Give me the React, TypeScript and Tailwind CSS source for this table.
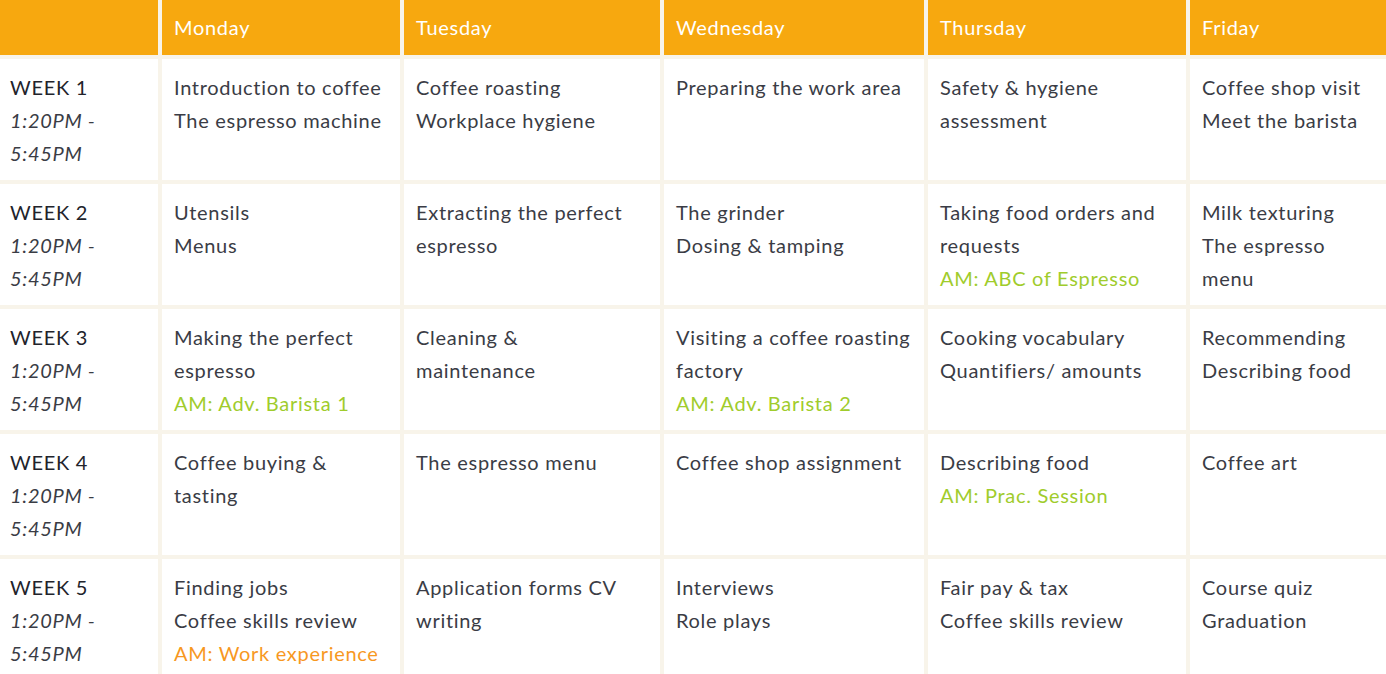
import React from 'react';

type Line = { text: string; tone?: 'green' | 'orange' };

const days = ['Monday', 'Tuesday', 'Wednesday', 'Thursday', 'Friday'];

const weeks: { label: string; cells: Line[][] }[] = [
  {
    label: 'WEEK 1',
    cells: [
      [{ text: 'Introduction to coffee' }, { text: 'The espresso machine' }],
      [{ text: 'Coffee roasting' }, { text: 'Workplace hygiene' }],
      [{ text: 'Preparing the work area' }],
      [{ text: 'Safety & hygiene assessment' }],
      [{ text: 'Coffee shop visit' }, { text: 'Meet the barista' }],
    ],
  },
  {
    label: 'WEEK 2',
    cells: [
      [{ text: 'Utensils' }, { text: 'Menus' }],
      [{ text: 'Extracting the perfect espresso' }],
      [{ text: 'The grinder' }, { text: 'Dosing & tamping' }],
      [{ text: 'Taking food orders and requests' }, { text: 'AM: ABC of Espresso', tone: 'green' }],
      [{ text: 'Milk texturing' }, { text: 'The espresso menu' }],
    ],
  },
  {
    label: 'WEEK 3',
    cells: [
      [{ text: 'Making the perfect espresso' }, { text: 'AM: Adv. Barista 1', tone: 'green' }],
      [{ text: 'Cleaning &\nmaintenance' }],
      [{ text: 'Visiting a coffee roasting factory' }, { text: 'AM: Adv. Barista 2', tone: 'green' }],
      [{ text: 'Cooking vocabulary' }, { text: 'Quantifiers/ amounts' }],
      [{ text: 'Recommending' }, { text: 'Describing food' }],
    ],
  },
  {
    label: 'WEEK 4',
    cells: [
      [{ text: 'Coffee buying & tasting' }],
      [{ text: 'The espresso menu' }],
      [{ text: 'Coffee shop assignment' }],
      [{ text: 'Describing food' }, { text: 'AM: Prac. Session', tone: 'green' }],
      [{ text: 'Coffee art' }],
    ],
  },
  {
    label: 'WEEK 5',
    cells: [
      [{ text: 'Finding jobs' }, { text: 'Coffee skills review' }, { text: 'AM: Work experience', tone: 'orange' }],
      [{ text: 'Application forms CV writing' }],
      [{ text: 'Interviews' }, { text: 'Role plays' }],
      [{ text: 'Fair pay & tax' }, { text: 'Coffee skills review' }],
      [{ text: 'Course quiz' }, { text: 'Graduation' }],
    ],
  },
];

const toneClass = (tone?: Line['tone']) =>
  tone === 'green' ? 'text-[#a0cc2c]' : tone === 'orange' ? 'text-[#f7981f]' : 'text-[#3a3c45]';

export default function App() {
  return (
    <div className="w-[1386px] h-[674px] overflow-hidden bg-[#f8f4ea] font-['Lato',sans-serif] text-[20px] leading-[33px] tracking-[0.7px]">
      <div className="grid grid-cols-[158px_238px_256px_260px_258px_196px] gap-1">
        {/* Header */}
        <div className="bg-[#f7a80f] h-[55px]" />
        {days.map((d) => (
          <div key={d} className="bg-[#f7a80f] h-[55px] px-3 py-[11px] text-white">
            {d}
          </div>
        ))}

        {weeks.map((w) => (
          <React.Fragment key={w.label}>
            <div className="bg-white h-[121px] pl-[10px] pr-2 py-[12px] text-[#22232b]">
              <div>{w.label}</div>
              <div className="italic text-[#3a3c45]">1:20PM -</div>
              <div className="italic text-[#3a3c45]">5:45PM</div>
            </div>
            {w.cells.map((cell, i) => (
              <div key={i} className="bg-white h-[121px] px-3 py-[12px]">
                {cell.map((l, j) => (
                  <div key={j} className={`whitespace-pre-line ${toneClass(l.tone)}`}>
                    {l.text}
                  </div>
                ))}
              </div>
            ))}
          </React.Fragment>
        ))}
      </div>
    </div>
  );
}
